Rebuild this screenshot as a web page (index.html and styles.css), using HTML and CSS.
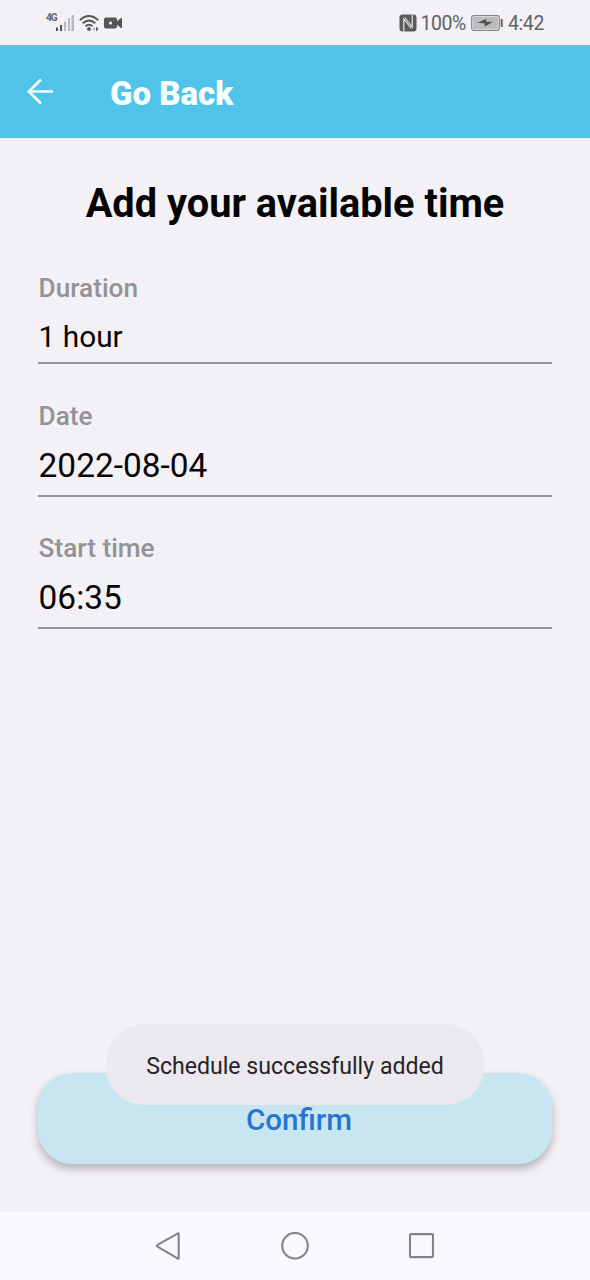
FILE: index.html
```html
<!DOCTYPE html>
<html lang="en">
<head>
<meta charset="utf-8">
<title>Add your available time</title>
<link rel="stylesheet" href="styles.css">
</head>
<body>
<div class="screen">
  <div class="status-bar">
    <div class="status-left">
      <span class="network">4G</span>
      <svg class="signal" width="18" height="18" viewBox="0 0 18 18">
        <path d="M0 13.500h2V17H0zM4 11h2v6H4z" fill="#555"/>
        <path d="M8 7.500h2V17H8zM12 4h2v13h-2zM15.500 1h2.500v16h-2.500z" fill="#bbb9bc"/>
      </svg>
      <svg class="wifi" width="20" height="18" viewBox="0 0 20 18">
        <g fill="none" stroke="#555" stroke-width="1.900"><path d="M.8 6.200Q10-2.200 19.200 6.200"/><path d="M3.700 9.300Q10 3.600 16.300 9.300"/><path d="M6.500 12.300Q10 9.200 13.500 12.300"/></g>
        <circle cx="10" cy="15" r="1.900" fill="#555"/>
        <path d="M16 12.500v5L13.500 15z" fill="#bbb9bc"/><path d="M17 12.500v5l2.500-2.500z" fill="#555"/>
      </svg>
      <svg class="camera" width="18" height="12" viewBox="0 0 18 12">
        <path fill="#555" fill-rule="evenodd" d="M2 .5h9a2 2 0 0 1 2 2v1.800l4-3.300h1v10h-1l-4-3.300v1.800a2 2 0 0 1-2 2H2a2 2 0 0 1-2-2v-7a2 2 0 0 1 2-2zM6.500 4.400a1.600 1.600 0 1 0 0 3.200 1.600 1.600 0 0 0 0-3.200z"/>
      </svg>
    </div>
    <div class="status-right">
      <svg class="nfc" width="18" height="18" viewBox="0 0 18 18">
        <path d="M3.500.5h11q3 0 3 3v11q0 3-3 3h-11q-3 0-3-3v-11q0-3 3-3z" fill="#5b5a5c"/>
        <path d="M4.800 17.500V5l7.500 9.500M13.200.5V13L5.700 3.500" fill="none" stroke="#f3f1f5" stroke-width="1.100"/>
      </svg>
      <span class="percent">100%</span>
      <svg class="battery" width="32" height="16" viewBox="0 0 32 16">
        <rect x=".7" y=".7" width="27.600" height="14.600" rx="2" fill="#f3f1f5" stroke="#858487" stroke-width="1.200"/>
        <rect x="2" y="2" width="25" height="12" fill="#bcbbbd"/>
        <path d="M6.500 7.700l9-4-.6 3h7.300l-8.800 5.100.5-3.400z" fill="#4f4e50"/>
        <rect x="29.700" y="4" width="2" height="8" fill="#666568"/>
      </svg>
      <span class="clock">4:42</span>
    </div>
  </div>
  <header class="app-bar">
    <svg class="back" width="28" height="28" viewBox="0 0 28 28"><path d="M27 13.500H2.500M15 1.500L2.800 13.500 15 25.500" fill="none" stroke="#f4fdff" stroke-width="2.600"/></svg>
    <span class="app-title">Go Back</span>
  </header>
  <main class="content">
    <h1 class="heading">Add your available time</h1>
    <div class="field field-duration">
      <div class="label">Duration</div>
      <div class="value value-duration">1 hour</div>
    </div>
    <div class="field">
      <div class="label">Date</div>
      <div class="value">2022-08-04</div>
    </div>
    <div class="field">
      <div class="label">Start time</div>
      <div class="value">06:35</div>
    </div>
    <div class="actions">
      <button class="confirm">Confirm</button>
      <div class="toast">Schedule successfully added</div>
    </div>
  </main>
  <nav class="nav-bar">
    <svg class="nav-icon" width="28" height="28" viewBox="0 0 28 28"><path d="M23.700 1.800v24.400a.5.500 0 0 1-.8.400L2.100 14.400a.7.700 0 0 1 0-1.200L22.900 1.400a.5.500 0 0 1 .8.400z"/></svg>
    <svg class="nav-icon" width="28" height="28" viewBox="0 0 28 28"><circle cx="14" cy="13.700" r="12.800"/></svg>
    <svg class="nav-icon" width="28" height="28" viewBox="0 0 28 28"><rect x="2" y="2.100" width="23" height="23" rx="1"/></svg>
  </nav>
</div>
</body>
</html>
```
FILE: styles.css
```css
* { box-sizing: border-box; }
body { margin: 0; font-family: Roboto, sans-serif; color: #050505; }
.screen { width: 590px; height: 1280px; display: flex; flex-direction: column; background: #f3f1f5; overflow: hidden; }
.status-bar { height: 46px; flex: none; display: flex; justify-content: space-between; padding: 0 46px; color: #626164; border-bottom: 1px solid #8bb6c5; }
.status-left, .status-right { display: flex; align-items: center; }
.network { font-size: 10px; font-weight: 700; line-height: 10px; margin-bottom: 9px; width: 10px; letter-spacing: -1px; }
.wifi { margin-left: 5px; }
.camera { margin-left: 5px; }
.percent { font-size: 19.500px; margin-left: 3px; letter-spacing: -.4px; padding-top: 1px; }
.battery { margin-left: 5px; }
.clock { font-size: 19.500px; margin-left: 5px; letter-spacing: -.4px; padding-top: 1px; }
.app-bar { height: 92px; flex: none; display: flex; align-items: center; background: #50c4e8; padding-left: 26px; }
.app-title { margin: 4px 0 0 56px; font-size: 33px; font-weight: 900; line-height: 40px; color: #f4fdff; }
.content { flex: 1; display: flex; flex-direction: column; padding: 41px 38px 48px; }
.heading { margin: 0; font-size: 39.750px; line-height: 50px; font-weight: 700; text-align: center; white-space: nowrap; }
.field { height: 132.300px; border-bottom: 2px solid #969498; display: flex; flex-direction: column; padding: 35.600px 0 0 .6px; }
.field-duration { height: 135.400px; padding-top: 43px; }
.label { font-size: 26.200px; line-height: 32px; font-weight: 500; color: #949295; }
.value { font-size: 33.400px; line-height: 40px; white-space: nowrap; margin-top: 14px; }
.value-duration { font-size: 29.800px; margin-top: 13px; }
.actions { margin-top: auto; position: relative; }
.confirm { display: block; width: 100%; height: 91px; border: 0; border-radius: 34px; background: #c8e6f2; box-shadow: 0 5px 8px rgba(60,50,60,.33); font: 500 29.600px/36px Roboto, sans-serif; color: #2874d3; padding: 3px 0 0 8px; }
.toast { position: absolute; left: 68px; top: -49px; width: 378px; height: 81px; border-radius: 38px; background: #ece9ee; display: flex; align-items: center; justify-content: center; padding-top: 4px; font-size: 23.100px; color: #252326; white-space: nowrap; }
.nav-bar { height: 68px; flex: none; display: flex; justify-content: center; align-items: center; gap: 98.500px; background: #faf8fc; }
.nav-icon { fill: none; stroke: #868488; stroke-width: 2.100; }
```
